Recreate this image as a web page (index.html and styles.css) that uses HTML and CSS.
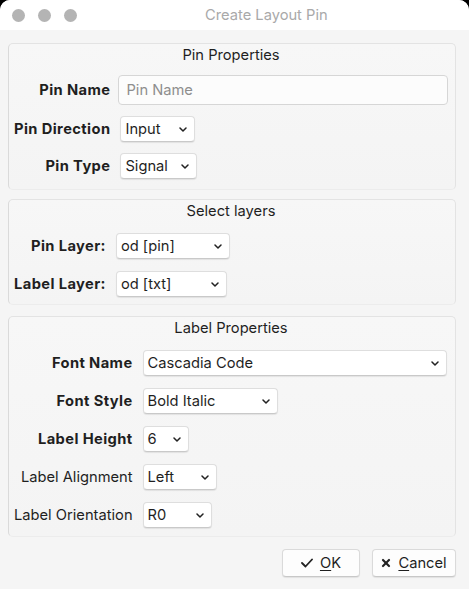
FILE: index.html
```html
<!DOCTYPE html>
<html>
<head>
<meta charset="utf-8">
<link rel="stylesheet" href="styles.css">
</head>
<body>
<div class="window">
  <div class="titlebar">
    <div class="lights"><span class="light"></span><span class="light"></span><span class="light"></span></div>
    <div class="title">Create Layout Pin</div>
  </div>
  <div class="content">
    <section class="group g1">
      <div class="group-title">Pin Properties</div>
      <div class="rows">
        <label class="lbl bold">Pin Name</label>
        <div class="input"><span class="ph">Pin Name</span></div>
        <label class="lbl bold">Pin Direction</label>
        <div class="select w-input"><span>Input</span><svg class="chev" viewBox="0 0 8 5"><polyline points="1,1 4,4 7,1"/></svg></div>
        <label class="lbl bold">Pin Type</label>
        <div class="select w-signal"><span>Signal</span><svg class="chev" viewBox="0 0 8 5"><polyline points="1,1 4,4 7,1"/></svg></div>
      </div>
    </section>
    <section class="group g2">
      <div class="group-title">Select layers</div>
      <div class="rows">
        <label class="lbl bold">Pin Layer:</label>
        <div class="select w-pin"><span>od [pin]</span><svg class="chev" viewBox="0 0 8 5"><polyline points="1,1 4,4 7,1"/></svg></div>
        <label class="lbl bold">Label Layer:</label>
        <div class="select w-txt"><span>od [txt]</span><svg class="chev" viewBox="0 0 8 5"><polyline points="1,1 4,4 7,1"/></svg></div>
      </div>
    </section>
    <section class="group g3">
      <div class="group-title">Label Properties</div>
      <div class="rows">
        <label class="lbl bold">Font Name</label>
        <div class="select wide"><span>Cascadia Code</span><svg class="chev" viewBox="0 0 8 5"><polyline points="1,1 4,4 7,1"/></svg></div>
        <label class="lbl bold">Font Style</label>
        <div class="select w-style"><span>Bold Italic</span><svg class="chev" viewBox="0 0 8 5"><polyline points="1,1 4,4 7,1"/></svg></div>
        <label class="lbl bold">Label Height</label>
        <div class="select w-height"><span>6</span><svg class="chev" viewBox="0 0 8 5"><polyline points="1,1 4,4 7,1"/></svg></div>
        <label class="lbl">Label Alignment</label>
        <div class="select w-align"><span>Left</span><svg class="chev" viewBox="0 0 8 5"><polyline points="1,1 4,4 7,1"/></svg></div>
        <label class="lbl">Label Orientation</label>
        <div class="select w-orient"><span>R0</span><svg class="chev" viewBox="0 0 8 5"><polyline points="1,1 4,4 7,1"/></svg></div>
      </div>
    </section>
    <div class="buttons">
      <button class="btn ok"><svg class="ico" viewBox="0 0 12 10"><polyline points="1,5 4.5,8.5 11,1.5"/></svg><span><u>O</u>K</span></button>
      <button class="btn cancel"><svg class="ico x" viewBox="0 0 10 10"><line x1="2" y1="2" x2="8" y2="8"/><line x1="8" y1="2" x2="2" y2="8"/></svg><span><u>C</u>ancel</span></button>
    </div>
  </div>
</div>
</body>
</html>
```

FILE: styles.css
```css
* { box-sizing: border-box; }
html, body {
  margin: 0;
  padding: 0;
}
body {
  width: 469px;
  height: 598px;
  background: linear-gradient(#000 0, #000 20px, #fff 20px);
  font-family: Inter, "Noto Sans", sans-serif;
  font-size: 14.7px;
  color: #1f1f1f;
  overflow: hidden;
}
.window {
  width: 469px;
  height: 589px;
  border-radius: 10px 10px 0 0;
  background: #f5f5f5;
  overflow: hidden;
  display: flex;
  flex-direction: column;
}
.titlebar {
  height: 30px;
  background: #fff;
  display: flex;
  align-items: center;
}
.lights {
  display: flex;
  gap: 13px;
  padding-left: 12px;
}
.light {
  width: 13px;
  height: 13px;
  border-radius: 50%;
  background: #b4b4b4;
}
.title {
  margin-left: 128px;
  color: #a9a9a9;
  font-size: 14.7px;
}
.content {
  flex: 1;
  padding: 13px 13px 0 8px;
  display: flex;
  flex-direction: column;
}
.group {
  border: 1px solid #e3e3e3;
  border-left-color: #dadada;
  border-bottom-color: #ececec;
  border-radius: 5px;
  background: linear-gradient(#f7f7f7, #f4f4f4);
  padding: 2px 7px 0 5px;
}
.g1 { height: 147px; }
.g2 { height: 106px; margin-top: 9px; }
.g3 { height: 221px; margin-top: 11px; }
.group-title {
  text-align: center;
  line-height: 19px;
  height: 19px;
}
.rows {
  display: grid;
  grid-template-columns: max-content 1fr;
  column-gap: 10px;
  row-gap: 12px;
  align-items: center;
  margin-top: 12px;
}
.g1 .rows { margin-top: 10px; row-gap: 11px; }
.lbl {
  text-align: right;
  color: #1f1f1f;
}
.bold { font-weight: 700; letter-spacing: 0.4px; }
.input {
  height: 30px;
  margin-left: -2px;
  background: #fcfcfc;
  border: 1px solid #d6d6d6;
  border-radius: 4px;
  display: flex;
  align-items: center;
  padding-left: 7px;
}
.ph { color: #8e8e8e; }
.select {
  justify-self: start;
  height: 26px;
  background: #fff;
  border: 1px solid #dedede;
  border-bottom-color: #c9c9c9;
  border-radius: 4px;
  box-shadow: 0 1px 1px rgba(0,0,0,0.08);
  display: flex;
  align-items: center;
  justify-content: space-between;
  padding: 0 7px 0 4px;
}
.chev {
  width: 8px;
  height: 5px;
  fill: none;
  stroke: #222;
  stroke-width: 1.5;
  stroke-linecap: round;
  stroke-linejoin: round;
}
.wide { justify-self: stretch; margin-right: 1px; }
.w-input { width: 75px; }
.w-signal { width: 77px; }
.w-pin { width: 114px; }
.w-txt { width: 111px; }
.w-style { width: 135px; }
.w-height { width: 46px; }
.w-align { width: 74px; }
.w-orient { width: 69px; }
.buttons {
  display: flex;
  justify-content: flex-end;
  gap: 12px;
  margin-top: 12px;
}
.btn {
  height: 28px;
  background: #fdfdfd;
  border: 1px solid #dadada;
  border-bottom-color: #c8c8c8;
  border-radius: 4px;
  box-shadow: 0 1px 1px rgba(0,0,0,0.08);
  font-family: Inter, "Noto Sans", sans-serif;
  font-size: 14.7px;
  color: #1f1f1f;
  display: flex;
  align-items: center;
  justify-content: center;
  gap: 7px;
  padding: 0;
}
.btn u { text-underline-offset: 2px; }
.ok { width: 78px; }
.cancel { width: 84px; }
.ico {
  width: 12px;
  height: 10px;
  fill: none;
  stroke: #222;
  stroke-width: 1.8;
  stroke-linecap: round;
  stroke-linejoin: round;
}
.ico.x { width: 10px; height: 10px; stroke-width: 2.2; }
```
